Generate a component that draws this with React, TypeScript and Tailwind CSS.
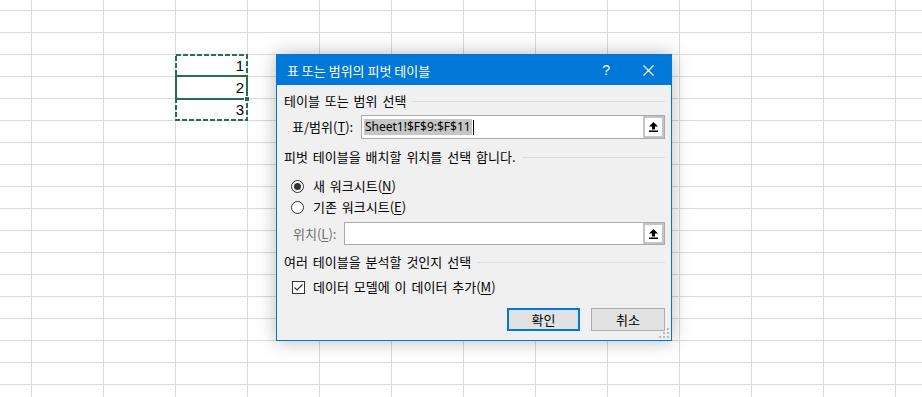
import type { ReactNode } from 'react'

const FONT = '"Noto Sans CJK KR", "Noto Sans", sans-serif'

const COLS = 14
const ROWS = 19

const VALUES: Record<string, string> = {
  '3-3': '1',
  '4-3': '2',
  '5-3': '3',
}

export default function App() {
  return (
    <div
      className="relative h-[397px] w-[922px] overflow-hidden bg-white"
      style={{ fontFamily: FONT }}
    >
      <SheetGrid />
      <SelectionOverlay />
      <PivotDialog />
    </div>
  )
}

function SheetGrid() {
  const cells: ReactNode[] = []
  for (let r = 0; r < ROWS; r++) {
    for (let c = 0; c < COLS; c++) {
      const value = VALUES[`${r}-${c}`]
      cells.push(
        <div
          key={`${r}-${c}`}
          className="flex items-center justify-end border-b border-r border-[#dadada] pr-[3px] text-[15px] leading-none text-black"
          style={{ fontFamily: '"Liberation Sans", Arial, sans-serif' }}
        >
          {value}
        </div>,
      )
    }
  }
  return (
    <div className="grid grid-cols-[32px_repeat(13,72px)] grid-rows-[11px_repeat(18,22px)]">
      {cells}
    </div>
  )
}

function SelectionOverlay() {
  return (
    <svg
      className="pointer-events-none absolute left-0 top-0"
      width={922}
      height={397}
      viewBox="0 0 922 397"
    >
      <rect
        x={176}
        y={55}
        width={71}
        height={65}
        fill="none"
        stroke="#217346"
        strokeWidth={2}
        strokeDasharray="5 2"
      />
      <rect x={176} y={76} width={71} height={23} fill="none" stroke="#217346" strokeWidth={2} />
      <rect x={244.5} y={96.5} width={5} height={5} fill="#217346" stroke="#fff" strokeWidth={1} />
    </svg>
  )
}

function PivotDialog() {
  return (
    <div className="absolute left-[276px] top-[54px] flex h-[287px] w-[396px] flex-col border border-[#0078d7] bg-[#f0f0f0] shadow-[0_0_18px_rgba(0,0,0,0.28)]">
      <TitleBar />

      <div className="relative flex flex-1 flex-col pl-[7px] pr-[6px] pt-[8px] text-[13px] leading-[16px] text-black [word-spacing:2px]">
        <SectionHeader>테이블 또는 범위 선택</SectionHeader>

        <div className="mt-[6px] flex h-[24px] items-center">
          <span className="w-[77px] shrink-0 pl-[8px]">
            표/범위(<u className="underline-offset-2">T</u>):
          </span>
          <RangeInput height="h-[24px]">
            <span className="bg-[#c6c6c6] px-[1px]">Sheet1!$F$9:$F$11</span>
            <span className="ml-[1px] inline-block h-[15px] w-px bg-black" />
          </RangeInput>
        </div>

        <div className="mt-[10px]">
          <SectionHeader>피벗 테이블을 배치할 위치를 선택 합니다.</SectionHeader>
        </div>

        <div className="mt-[13px] flex h-[16px] items-center pl-[7px]">
          <Radio checked />
          <span className="ml-[9px]">
            새 워크시트(<u className="underline-offset-2">N</u>)
          </span>
        </div>

        <div className="mt-[5px] flex h-[16px] items-center pl-[7px]">
          <Radio />
          <span className="ml-[9px]">
            기존 워크시트(<u className="underline-offset-2">E</u>)
          </span>
        </div>

        <div className="mt-[7px] flex h-[23px] items-center">
          <span className="w-[60px] shrink-0 pl-[9px] text-[#6d6d6d]">
            위치(<u className="underline-offset-2">L</u>):
          </span>
          <RangeInput height="h-[23px]" />
        </div>

        <div className="mt-[9px]">
          <SectionHeader>여러 테이블을 분석할 것인지 선택</SectionHeader>
        </div>

        <div className="mt-[9px] flex h-[16px] items-center pl-[8px]">
          <Checkbox />
          <span className="ml-[8px]">
            데이터 모델에 이 데이터 추가(<u className="underline-offset-2">M</u>)
          </span>
        </div>

        <div className="mt-[13px] flex justify-end gap-[11px]">
          <button
            type="button"
            className="h-[23px] w-[73px] border-2 border-[#0078d7] bg-[#e1e1e1] text-[13px] leading-none text-black"
          >
            확인
          </button>
          <button
            type="button"
            className="h-[23px] w-[74px] border border-[#adadad] bg-[#e1e1e1] text-[13px] leading-none text-black"
          >
            취소
          </button>
        </div>

        <SizeGrip />
      </div>
    </div>
  )
}

function TitleBar() {
  return (
    <div className="flex h-[30px] shrink-0 items-center bg-[#0078d7] text-[13px] leading-none text-white">
      <span className="pl-[10px]">표 또는 범위의 피벗 테이블</span>
      <span className="ml-auto mr-[33px] text-[14px]" style={{ fontFamily: '"Liberation Sans", sans-serif' }}>
        ?
      </span>
      <svg width={11} height={11} viewBox="0 0 11 11" className="mr-[17px]">
        <path d="M0.5 0.5 L10.5 10.5 M10.5 0.5 L0.5 10.5" stroke="#fff" strokeWidth={1.1} />
      </svg>
    </div>
  )
}

function SectionHeader({ children }: { children: ReactNode }) {
  return (
    <div className="flex h-[16px] items-center gap-[6px]">
      <span className="shrink-0">{children}</span>
      <span className="h-px flex-1 bg-[#dcdcdc]" />
    </div>
  )
}

function RangeInput({ height, children }: { height: string; children?: ReactNode }) {
  return (
    <div className={`flex ${height} flex-1 items-stretch border border-[#a9a9a9] bg-white`}>
      <div
        className="flex flex-1 items-center pl-[2px] text-[12px] text-black [word-spacing:0px]"
        style={{ fontFamily: '"Noto Sans", sans-serif' }}
      >
        {children}
      </div>
      <div className="flex w-[21px] items-center justify-center border-2 border-[#c4c4c4] bg-white">
        <svg width={9} height={10} viewBox="0 0 9 10">
          <path d="M4.5 0 L9 4.5 L6 4.5 L6 7.5 L3 7.5 L3 4.5 L0 4.5 Z" fill="#000" />
          <rect x={0} y={8.5} width={9} height={1.5} fill="#000" />
        </svg>
      </div>
    </div>
  )
}

function Radio({ checked = false }: { checked?: boolean }) {
  return (
    <svg width={13} height={13} viewBox="0 0 13 13" className="shrink-0">
      <circle cx={6.5} cy={6.5} r={6} fill="#fff" stroke="#333" strokeWidth={1} />
      {checked && <circle cx={6.5} cy={6.5} r={3.5} fill="#333" />}
    </svg>
  )
}

function Checkbox() {
  return (
    <svg width={13} height={13} viewBox="0 0 13 13" className="shrink-0">
      <rect x={0.5} y={0.5} width={12} height={12} fill="#fff" stroke="#333" strokeWidth={1} />
      <path d="M2.5 6.5 L5 9 L10.5 3.5" fill="none" stroke="#333" strokeWidth={1.2} />
    </svg>
  )
}

function SizeGrip() {
  const dots = [
    [8, 0],
    [4, 4],
    [8, 4],
    [0, 8],
    [4, 8],
    [8, 8],
  ]
  return (
    <svg width={10} height={10} viewBox="0 0 10 10" className="absolute bottom-[2px] right-[2px]">
      {dots.map(([x, y]) => (
        <rect key={`${x}-${y}`} x={x} y={y} width={2} height={2} fill="#b8b8b8" />
      ))}
    </svg>
  )
}
